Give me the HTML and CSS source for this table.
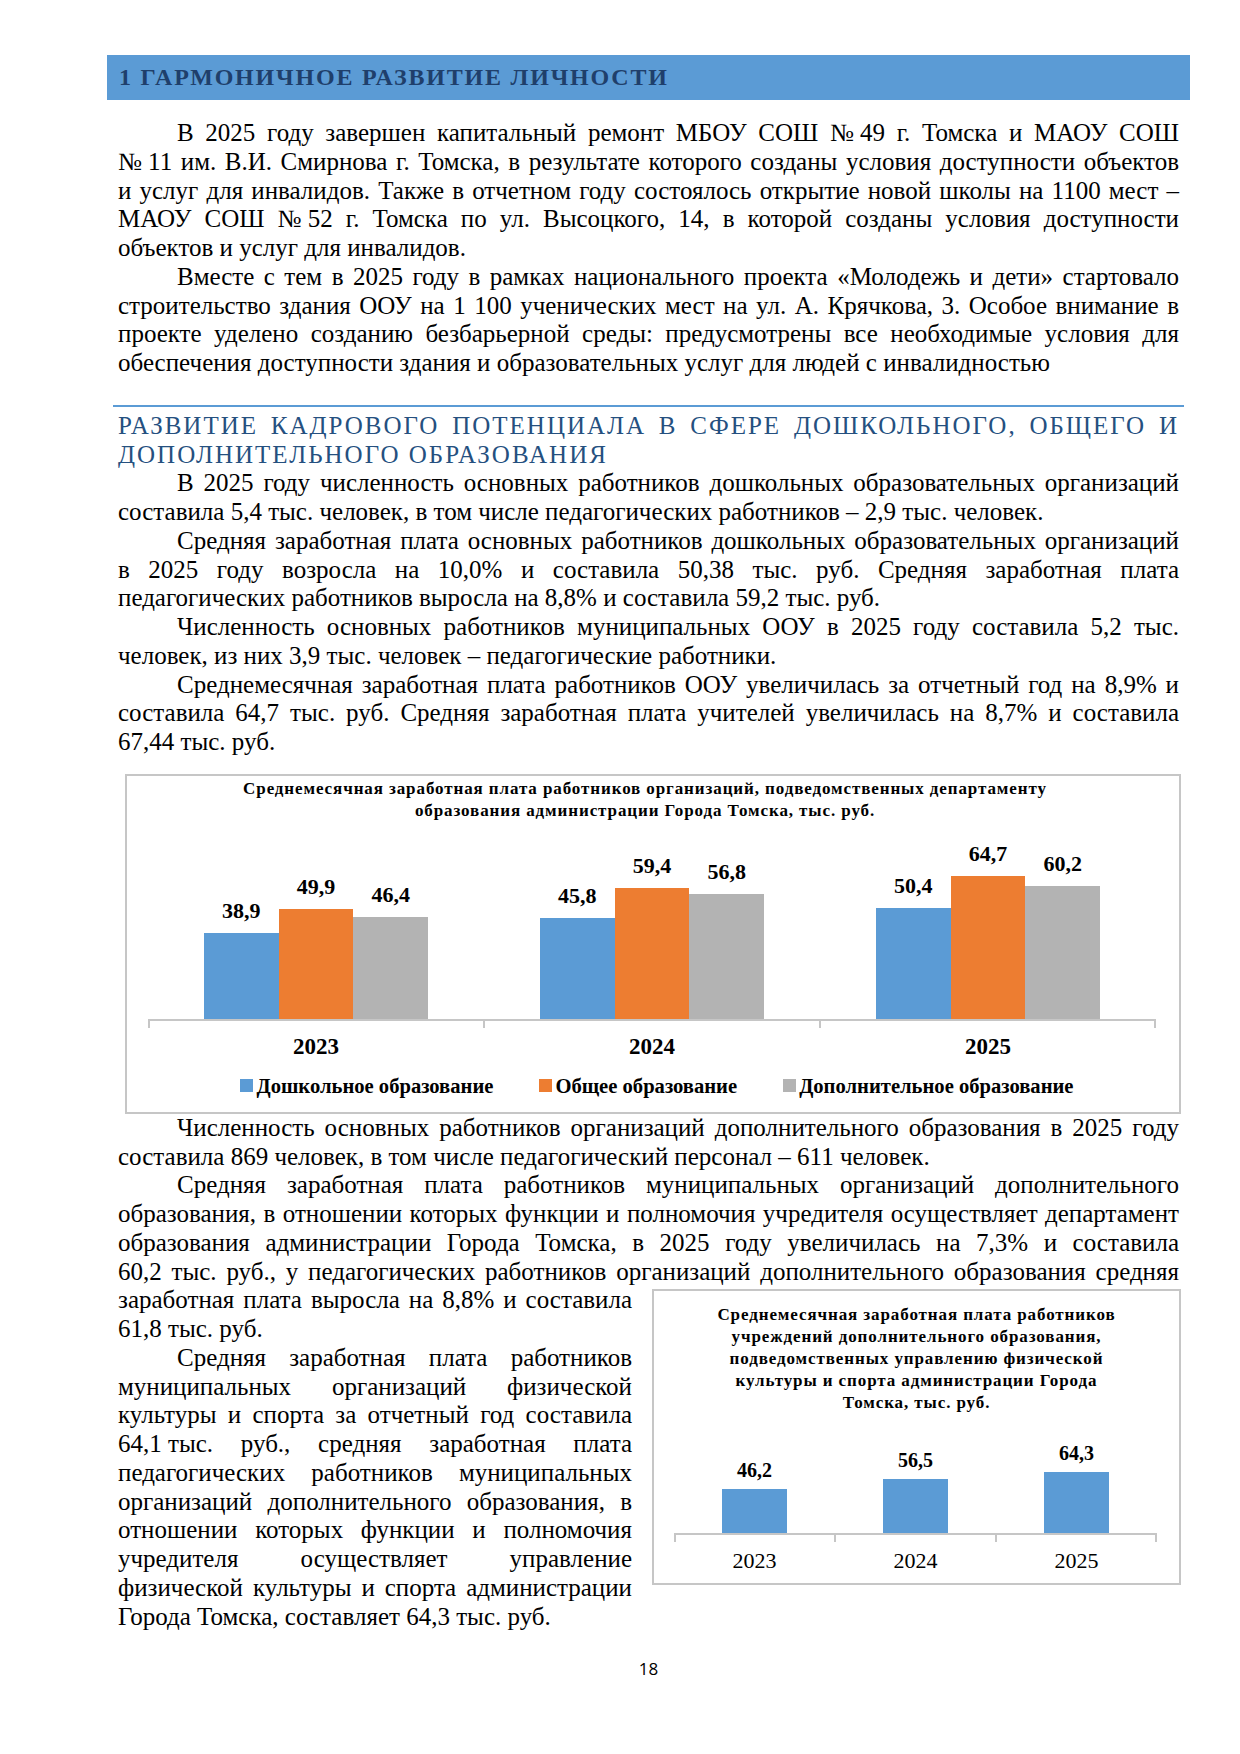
FILE: index.html
```html
<!DOCTYPE html>
<html lang="ru">
<head>
<meta charset="utf-8">
<title>Гармоничное развитие личности</title>
<link rel="stylesheet" href="styles.css">
</head>
<body>
<div class="page">
  <h1 class="chapter">1 ГАРМОНИЧНОЕ РАЗВИТИЕ ЛИЧНОСТИ</h1>

  <p class="para"><span class="jl">В 2025 году завершен капитальный ремонт МБОУ СОШ <span class="nb">№ 49</span> г. Томска и МАОУ СОШ<br><span class="nb">№ 11</span> им. В.И. Смирнова г. Томска, в результате которого созданы условия доступности объектов<br>и услуг для инвалидов. Также в отчетном году состоялось открытие новой школы на 1100 мест –<br>МАОУ СОШ <span class="nb">№ 52</span> г. Томска по ул. Высоцкого, 14, в которой созданы условия доступности</span><span class="ll">объектов и услуг для инвалидов.</span></p>
  <p class="para"><span class="jl">Вместе с тем в 2025 году в рамках национального проекта «Молодежь и дети» стартовало<br>строительство здания ООУ на 1 100 ученических мест на ул. А. Крячкова, 3. Особое внимание в<br>проекте уделено созданию безбарьерной среды: предусмотрены все необходимые условия для</span><span class="ll">обеспечения доступности здания и образовательных услуг для людей с инвалидностью</span></p>

  <h2 class="section">РАЗВИТИЕ КАДРОВОГО ПОТЕНЦИАЛА В СФЕРЕ ДОШКОЛЬНОГО, ОБЩЕГО И ДОПОЛНИТЕЛЬНОГО ОБРАЗОВАНИЯ</h2>

  <p class="para"><span class="jl">В 2025 году численность основных работников дошкольных образовательных организаций</span><span class="ll">составила 5,4 тыс. человек, в том числе педагогических работников – 2,9 тыс. человек.</span></p>
  <p class="para"><span class="jl">Средняя заработная плата основных работников дошкольных образовательных организаций<br>в 2025 году возросла на 10,0% и составила 50,38 тыс. руб. Средняя заработная плата</span><span class="ll">педагогических работников выросла на 8,8% и составила 59,2 тыс. руб.</span></p>
  <p class="para"><span class="jl">Численность основных работников муниципальных ООУ в 2025 году составила 5,2 тыс.</span><span class="ll">человек, из них 3,9 тыс. человек – педагогические работники.</span></p>
  <p class="para"><span class="jl">Среднемесячная заработная плата работников ООУ увеличилась за отчетный год на 8,9% и<br>составила 64,7 тыс. руб. Средняя заработная плата учителей увеличилась на 8,7% и составила</span><span class="ll">67,44 тыс. руб.</span></p>

  <figure class="chart chart-main">
    <div class="chart-title main-title">Среднемесячная заработная плата работников организаций, подведомственных департаменту<br>образования администрации Города Томска, тыс. руб.</div>
    <div class="plot plot-main">
      <div class="groups">
        <div class="group">
          <div class="col"><span class="val">38,9</span><div class="bar c-blue" style="height:86px"></div></div>
          <div class="col"><span class="val">49,9</span><div class="bar c-orange" style="height:110px"></div></div>
          <div class="col"><span class="val">46,4</span><div class="bar c-gray" style="height:102px"></div></div>
        </div>
        <div class="group">
          <div class="col"><span class="val">45,8</span><div class="bar c-blue" style="height:101px"></div></div>
          <div class="col"><span class="val">59,4</span><div class="bar c-orange" style="height:131px"></div></div>
          <div class="col"><span class="val">56,8</span><div class="bar c-gray" style="height:125px"></div></div>
        </div>
        <div class="group">
          <div class="col"><span class="val">50,4</span><div class="bar c-blue" style="height:111px"></div></div>
          <div class="col"><span class="val">64,7</span><div class="bar c-orange" style="height:143px"></div></div>
          <div class="col"><span class="val">60,2</span><div class="bar c-gray" style="height:133px"></div></div>
        </div>
      </div>
      <div class="ticks"><span></span><span></span><span></span></div>
      <div class="cats"><span>2023</span><span>2024</span><span>2025</span></div>
    </div>
    <div class="legend">
      <span class="key"><i class="sw c-blue"></i>Дошкольное образование</span>
      <span class="key"><i class="sw c-orange"></i>Общее образование</span>
      <span class="key"><i class="sw c-gray"></i>Дополнительное образование</span>
    </div>
  </figure>

  <p class="para"><span class="jl">Численность основных работников организаций дополнительного образования в 2025 году</span><span class="ll">составила 869 человек, в том числе педагогический персонал – 611 человек.</span></p>
  <p class="para"><span class="jl">Средняя заработная плата работников муниципальных организаций дополнительного<br>образования, в отношении которых функции и полномочия учредителя осуществляет департамент<br>образования администрации Города Томска, в 2025 году увеличилась на 7,3% и составила<br>60,2 тыс. руб., у педагогических работников организаций дополнительного образования средняя</span></p>

  <div class="wrap-row">
    <div class="wrap-text">
      <p class="para para-cont"><span class="jl">заработная плата выросла на 8,8% и составила</span><span class="ll">61,8 тыс. руб.</span></p>
      <p class="para"><span class="jl">Средняя заработная плата работников<br>муниципальных организаций физической<br>культуры и спорта за отчетный год составила<br><span class="nb">64,1 тыс.</span> руб., средняя заработная плата<br>педагогических работников муниципальных<br>организаций дополнительного образования, в<br>отношении которых функции и полномочия<br>учредителя осуществляет управление<br>физической культуры и спорта администрации</span><span class="ll">Города Томска, составляет 64,3 тыс. руб.</span></p>
    </div>
    <figure class="chart chart-side">
      <div class="chart-title side-title">Среднемесячная заработная плата работников<br>учреждений дополнительного образования,<br>подведомственных управлению физической<br>культуры и спорта администрации Города<br>Томска, тыс. руб.</div>
      <div class="plot plot-side">
        <div class="groups">
          <div class="group">
            <div class="col"><span class="val">46,2</span><div class="bar c-blue" style="height:44px"></div></div>
          </div>
          <div class="group">
            <div class="col"><span class="val">56,5</span><div class="bar c-blue" style="height:54px"></div></div>
          </div>
          <div class="group">
            <div class="col"><span class="val">64,3</span><div class="bar c-blue" style="height:61px"></div></div>
          </div>
        </div>
        <div class="ticks"><span></span><span></span><span></span></div>
        <div class="cats"><span>2023</span><span>2024</span><span>2025</span></div>
      </div>
    </figure>
  </div>

  <footer class="page-num">18</footer>
</div>
</body>
</html>
```

FILE: styles.css
```css
html, body {
  margin: 0;
  padding: 0;
  background: #ffffff;
}

body {
  font-family: "Liberation Serif", "Times New Roman", serif;
  color: #000000;
}

.page {
  width: 1061px;
  margin-left: 118px;
  padding-top: 55px;
}

.chapter {
  margin: 0 -11px;
  height: 45px;
  padding-left: 12px;
  background: #5b9bd5;
  color: #1f3f6b;
  font-family: "Liberation Serif", "Times New Roman", serif;
  font-size: 24px;
  font-weight: bold;
  line-height: 45px;
  letter-spacing: 1.8px;
}

.para {
  margin: 0;
  font-size: 25px;
  line-height: 28.75px;
  text-align: justify;
  text-indent: 59px;
}

.jl {
  display: block;
  text-align-last: justify;
}

.ll {
  display: block;
  text-indent: 0;
  text-align-last: left;
}

/* keeps the narrow space after "№" and inside "64,1 тыс." from stretching */
.nb {
  display: inline-block;
  text-indent: 0;
  white-space: nowrap;
}

.chapter + .para {
  margin-top: 19px;
}

.section {
  margin: 27px -5px 0;
  padding: 5px 5px 0;
  border-top: 2px solid #5b9bd5;
  color: #25507f;
  font-family: "Liberation Serif", "Times New Roman", serif;
  font-size: 25px;
  font-weight: normal;
  line-height: 28.75px;
  letter-spacing: 2px;
  text-align: justify;
}

.para-cont {
  text-indent: 0;
}

/* charts */
.chart {
  margin: 0;
  box-sizing: border-box;
  border: 2px solid #c6c6c6;
  background: #ffffff;
}

.chart-title {
  font-size: 17px;
  font-weight: bold;
  line-height: 22px;
  letter-spacing: 0.9px;
  text-align: center;
}

.chart-main {
  margin: 17px -2px 0 7px;
  height: 340px;
  padding-top: 2px;
}

.main-title {
  margin-left: -16px;
}

.plot-main {
  width: 1008px;
  margin: 22px 0 0 21px;
}

.groups {
  display: flex;
}

.plot-main .groups {
  height: 175px;
}

.group {
  flex: 1;
  display: flex;
  justify-content: center;
  align-items: flex-end;
}

.col {
  display: flex;
  flex-direction: column;
  align-items: center;
  justify-content: flex-end;
}

.plot-main .col {
  width: 74.67px;
}

.val {
  font-weight: bold;
  white-space: nowrap;
}

.plot-main .val {
  font-size: 22px;
  line-height: 22px;
  margin-bottom: 11px;
}

.bar {
  width: 100%;
}

.c-blue { background: #5b9bd5; }
.c-orange { background: #ed7d31; }
.c-gray { background: #b3b3b3; }

.ticks {
  display: flex;
  border-top: 2px solid #c6c6c6;
}

.ticks span {
  flex: 1;
  height: 7px;
  border-left: 2px solid #c6c6c6;
}

.ticks span:last-child {
  border-right: 2px solid #c6c6c6;
}

.cats {
  display: flex;
}

.cats span {
  flex: 1;
  text-align: center;
}

.plot-main .cats {
  margin-top: 7px;
  font-size: 23px;
  line-height: 23px;
  font-weight: bold;
}

.legend {
  display: flex;
  justify-content: center;
  gap: 46px;
  margin: 16px 0 0 8px;
  font-size: 20.6px;
  font-weight: bold;
  line-height: 24px;
}

.key {
  display: flex;
  align-items: center;
}

.sw {
  width: 13px;
  height: 13px;
  margin-right: 3px;
}

/* wrapped area with side chart */
.wrap-row {
  display: flex;
  align-items: flex-start;
  gap: 20px;
}

.wrap-text {
  width: 514px;
  flex: none;
}

.chart-side {
  flex: none;
  width: 529px;
  height: 296px;
  margin-top: 3px;
  padding-top: 13px;
}

.plot-side {
  width: 483px;
  margin: 25px 0 0 20px;
}

.plot-side .groups {
  height: 94px;
}

.plot-side .col {
  width: 65px;
}

.plot-side .val {
  font-size: 20px;
  line-height: 20px;
  margin-bottom: 9px;
}

.plot-side .cats {
  margin-top: 8px;
  font-size: 22px;
  line-height: 22px;
}

.page-num {
  margin-top: 28px;
  font-family: "Open Sans", "Liberation Sans", sans-serif;
  font-size: 17px;
  line-height: 20px;
  text-align: center;
}
```
